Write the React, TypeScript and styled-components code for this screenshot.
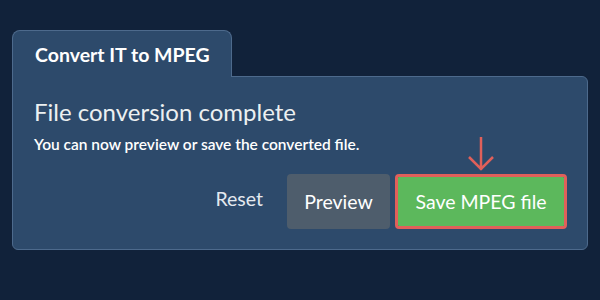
import React from 'react'
import styled, { createGlobalStyle } from 'styled-components'

const GlobalStyle = createGlobalStyle`
  html, body {
    margin: 0;
    padding: 0;
    background: #11223a;
  }
  body {
    font-family: Lato, "Open Sans", sans-serif;
    color: #ecf0f1;
  }
`

const App = () => {
  return (
    <Page>
      <GlobalStyle />
      <Tab>Convert IT to MPEG</Tab>
      <Panel>
        <Title>File conversion complete</Title>
        <Subtitle>You can now preview or save the converted file.</Subtitle>
        <Actions>
          <Button variant="link">Reset</Button>
          <Button variant="default">Preview</Button>
          <Highlight>
            <Arrow width="28" height="36" viewBox="0 0 28 36">
              <path d="M14 1 V34 M2 21 L14 33 L26 21" fill="none" stroke="#e0605a" strokeWidth="2.5" />
            </Arrow>
            <Button variant="success">Save MPEG file</Button>
          </Highlight>
        </Actions>
      </Panel>
    </Page>
  )
}

export default App

const Page = styled.div`
  width: 600px;
  height: 300px;
  box-sizing: border-box;
  padding: 30px 12px 0 12px;
  display: flex;
  flex-direction: column;
  align-items: flex-start;
`
const Tab = styled.div`
  position: relative;
  z-index: 1;
  box-sizing: border-box;
  width: 220px;
  height: 47px;
  margin-bottom: -1px;
  padding: 12px 0 0 22px;
  background: #2d4a6b;
  border: 1px solid #4d6a8c;
  border-bottom: none;
  border-radius: 8px 8px 0 0;
  font-size: 19.5px;
  font-weight: 700;
  line-height: 24px;
  color: #ffffff;
`
const Panel = styled.div`
  box-sizing: border-box;
  width: 576px;
  height: 174px;
  padding: 20px 20px 20px 21px;
  background: #2d4a6b;
  border: 1px solid #4d6a8c;
  border-radius: 0 6px 6px 6px;
  display: flex;
  flex-direction: column;
`
const Title = styled.h2`
  margin: 0;
  font-size: 24px;
  font-weight: 400;
  line-height: 29px;
  color: #ecf0f1;
`
const Subtitle = styled.p`
  margin: 9px 0 0 0;
  font-size: 15.5px;
  font-weight: 600;
  line-height: 18px;
  color: #ffffff;
`
const Actions = styled.div`
  margin-top: auto;
  display: flex;
  justify-content: flex-end;
  align-items: stretch;
  gap: 5px;
`
const Highlight = styled.div`
  position: relative;
  display: flex;
  border: 3px solid #e0605a;
  border-radius: 4px;
`
const Arrow = styled.svg`
  position: absolute;
  left: 50%;
  top: -41px;
  transform: translateX(-50%);
`
const Button = styled.button<{ variant: 'link' | 'default' | 'success' }>`
  box-sizing: border-box;
  height: ${p => (p.variant === 'success' ? '49px' : '55px')};
  width: ${p => (p.variant === 'success' ? '166px' : p.variant === 'default' ? '103px' : 'auto')};
  padding: ${p => (p.variant === 'link' ? '0 19px 7px 22px' : '0')};
  border: none;
  border-radius: ${p => (p.variant === 'success' ? '1px' : '4px')};
  font-family: Lato, "Open Sans", sans-serif;
  font-size: 19.5px;
  font-weight: 400;
  background: ${p => (p.variant === 'success' ? '#5cb85c' : p.variant === 'default' ? '#4e5d6c' : 'transparent')};
  color: ${p => (p.variant === 'link' ? '#e4e9ef' : '#ffffff')};
  cursor: pointer;
`
